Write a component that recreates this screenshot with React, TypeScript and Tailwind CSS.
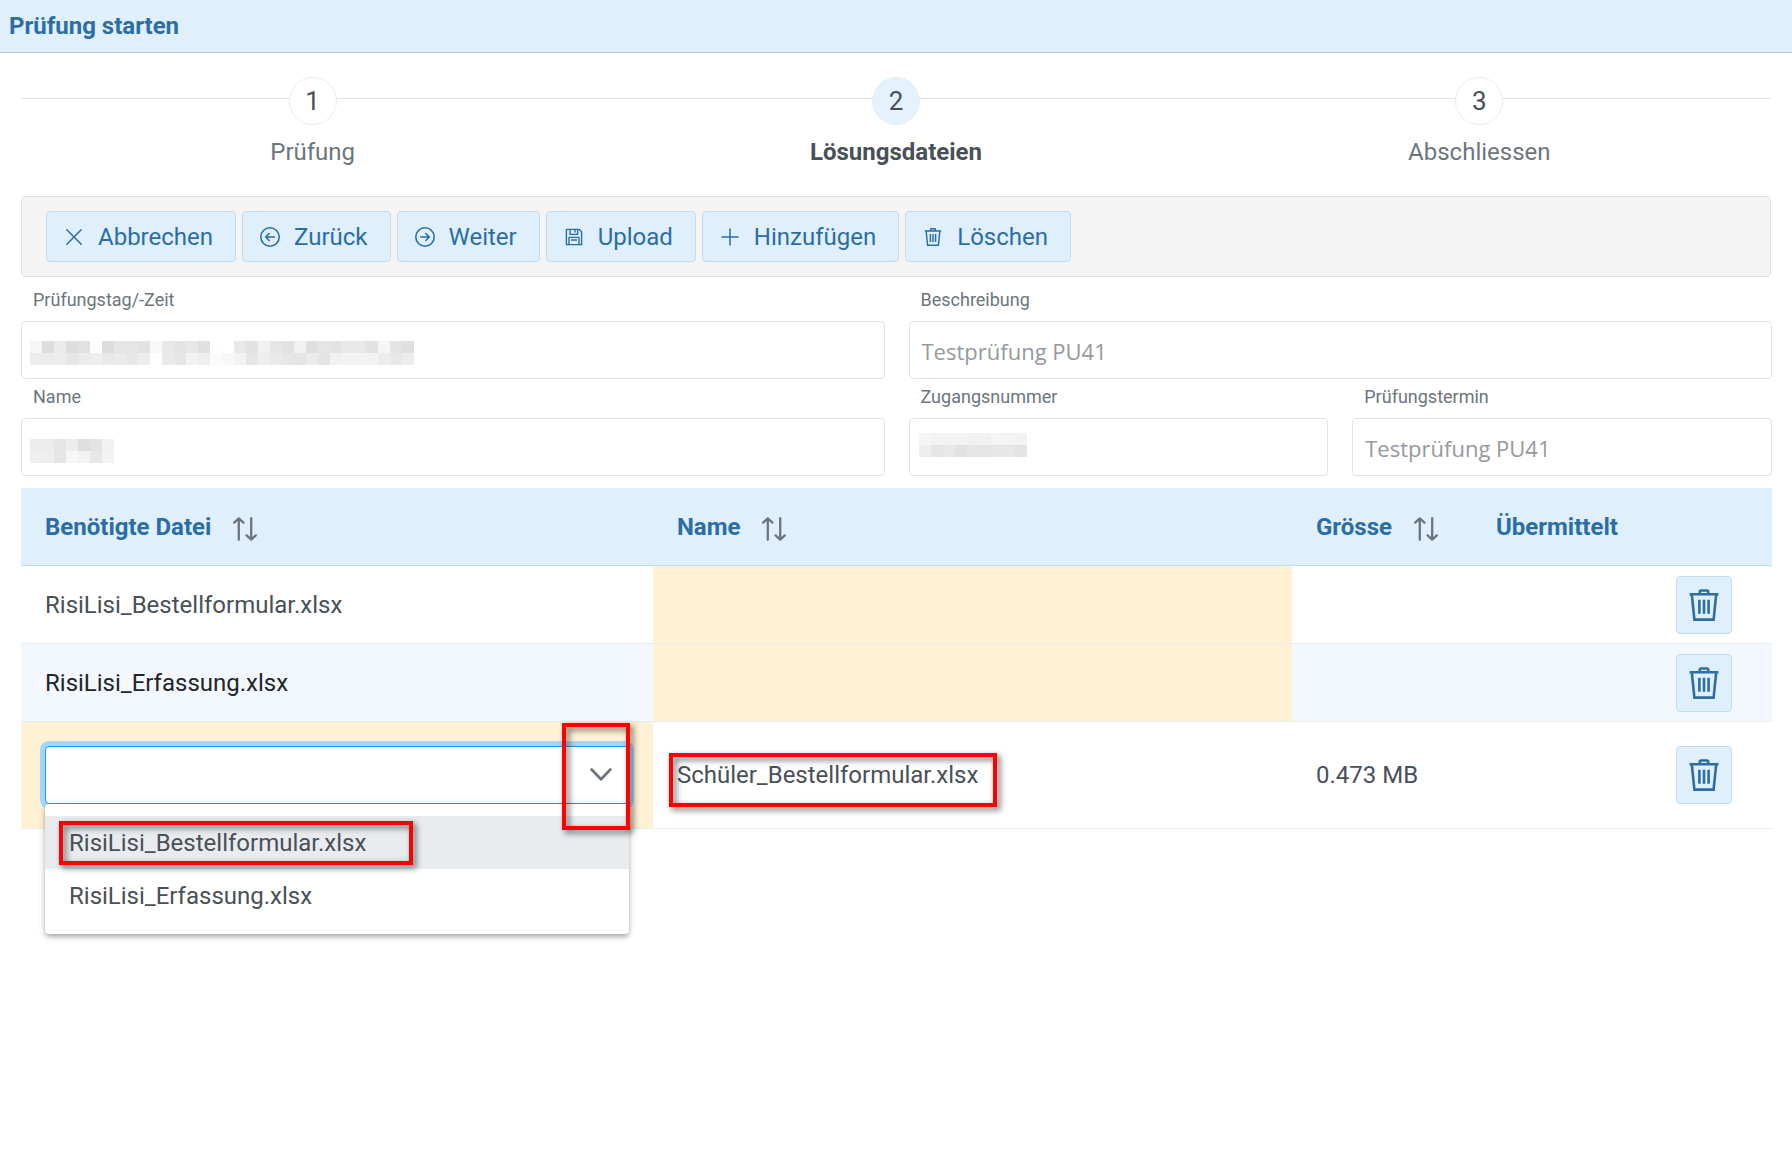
import type { ReactNode } from 'react';

interface IconProps {
  className?: string;
}

interface Step {
  label: string;
  active?: boolean;
}

interface FileRow {
  id: number;
  required: string | null;
  name: string;
  size: string;
}

interface FieldProps {
  id: string;
  label: string;
  value?: string;
  className?: string;
  children?: ReactNode;
}

const steps: Step[] = [
  { label: 'Prüfung' },
  { label: 'Lösungsdateien', active: true },
  { label: 'Abschliessen' },
];

const rows: FileRow[] = [
  { id: 1, required: 'RisiLisi_Bestellformular.xlsx', name: '', size: '' },
  { id: 2, required: 'RisiLisi_Erfassung.xlsx', name: '', size: '' },
  { id: 3, required: null, name: 'Schüler_Bestellformular.xlsx', size: '0.473 MB' },
];

const options = ['RisiLisi_Bestellformular.xlsx', 'RisiLisi_Erfassung.xlsx'];

// grey levels of the redacted values, one list per mosaic row
const examDateMask = [
  [246, 221, 235, 221, 225, 252, 221, 229, 229, 226, 248, 232, 227, 232, 224, 254, 255, 232, 226, 241, 229, 226, 241, 223, 229, 227, 233, 232, 226, 245, 228, 223],
  [236, 235, 236, 230, 235, 238, 233, 235, 232, 236, 255, 233, 230, 243, 238, 251, 248, 243, 230, 237, 233, 230, 229, 235, 228, 241, 243, 243, 242, 236, 232, 236],
];
const nameMask = [
  [237, 236, 229, 237, 222, 227, 241],
  [239, 238, 229, 246, 243, 231, 243],
];
const accessMask = [
  [245, 243, 243, 243, 241, 241, 245, 244, 242],
  [238, 229, 232, 226, 230, 229, 231, 231, 227],
];

function CloseIcon({ className }: IconProps) {
  return (
    <svg className={className} viewBox="0 0 20 20" fill="none" stroke="currentColor" strokeWidth={1.5} strokeLinecap="round">
      <path d="M2.8 2.8l14.4 14.4M17.2 2.8L2.8 17.2" />
    </svg>
  );
}

function ArrowCircleLeftIcon({ className }: IconProps) {
  return (
    <svg className={className} viewBox="0 0 20 20" fill="none" stroke="currentColor" strokeWidth={1.6} strokeLinecap="round" strokeLinejoin="round">
      <circle cx="10" cy="10" r="9.2" />
      <path d="M14.4 10H5.8M9.2 6.5L5.7 10l3.5 3.5" />
    </svg>
  );
}

function ArrowCircleRightIcon({ className }: IconProps) {
  return (
    <svg className={className} viewBox="0 0 20 20" fill="none" stroke="currentColor" strokeWidth={1.6} strokeLinecap="round" strokeLinejoin="round">
      <circle cx="10" cy="10" r="9.2" />
      <path d="M5.6 10h8.6M10.8 6.5l3.5 3.5-3.5 3.5" />
    </svg>
  );
}

function SaveIcon({ className }: IconProps) {
  return (
    <svg className={className} viewBox="0 0 20 20" fill="none" stroke="currentColor" strokeWidth={1.4} strokeLinejoin="round">
      <path d="M2.4 2.4h12.8l2.4 2.4v12.8H2.4z" />
      <path d="M6 2.6v4.8h7.6V2.6M11 3v2.4M5 17.4v-7h10v7M7 13h6" />
    </svg>
  );
}

function PlusIcon({ className }: IconProps) {
  return (
    <svg className={className} viewBox="0 0 20 20" fill="none" stroke="currentColor" strokeWidth={1.5} strokeLinecap="round">
      <path d="M10 2v16M2 10h16" />
    </svg>
  );
}

function TrashIcon({ className }: IconProps) {
  return (
    <svg className={className} viewBox="0 0 32 32" fill="none" stroke="currentColor" strokeWidth={2.6}>
      <path d="M1.5 5.2h29M11.8 5V2.8c0-.8.5-1.3 1.2-1.3h6c.7 0 1.2.5 1.2 1.3V5" />
      <path d="M3.8 5.4l2.6 25.2h19.2l2.6-25.2M11.4 10.8v14M16 10.8v14M20.6 10.8v14" />
    </svg>
  );
}

function SortIcon() {
  return (
    <svg className="mt-1 h-6 w-6 text-[#6c757d]" viewBox="0 0 24 24" fill="none" stroke="currentColor" strokeWidth={2.3} strokeLinecap="round" strokeLinejoin="round">
      <path d="M5.8 22.8V1.4M1.2 5.6l4.6-4.2 4.6 4.2" />
      <path d="M18.2 1.2v21.4M13.6 18.4l4.6 4.2 4.6-4.2" />
    </svg>
  );
}

function Mask({ levels, className }: { levels: number[][]; className: string }) {
  return (
    <svg
      className={`absolute ${className}`}
      width={levels[0].length * 12}
      height={levels.length * 12}
      shapeRendering="crispEdges"
      aria-hidden="true"
    >
      {levels.map((line, y) =>
        line.map((v, x) => (
          <rect key={`${x}-${y}`} x={x * 12} y={y * 12} width={12} height={12} fill={`rgb(${v},${v},${v + 1})`} />
        ))
      )}
    </svg>
  );
}

function Field({ id, label, value = '', className = '', children }: FieldProps) {
  return (
    <div className={className}>
      <label htmlFor={id} className="block h-11 pl-3 pt-[11px] text-lg leading-6 text-[#6c757d]">
        {label}
      </label>
      <div className="relative">
        <input
          id={id}
          type="text"
          readOnly
          defaultValue={value}
          className="block h-[58px] w-full rounded border border-[#e1e3e7] bg-white px-3 pt-0.5 font-['Open_Sans','Noto_Sans',sans-serif] text-[22px] text-[#96999d] outline-none"
        />
        {children}
      </div>
    </div>
  );
}

function ToolbarButton({ icon, children }: { icon: ReactNode; children: ReactNode }) {
  return (
    <button
      type="button"
      className="flex h-[51px] items-center gap-3.5 rounded border border-[#c1dcec] bg-[#dfeffc] pl-[17px] pr-[22px] text-2xl text-[#2c6ea3]"
    >
      {icon}
      {children}
    </button>
  );
}

function FileSelect() {
  return (
    <div className="relative">
      <select
        aria-label="Benötigte Datei"
        defaultValue=""
        className="block h-[58px] w-full appearance-none rounded border border-[#2196f3] bg-white px-3 text-2xl shadow-[0_0_0_5px_#a6d5fa] outline-none"
      >
        <option value=""></option>
        {options.map((option) => (
          <option key={option}>{option}</option>
        ))}
      </select>
      <svg className="pointer-events-none absolute right-4 top-4 h-6 w-6 text-[#6c757d]" viewBox="0 0 24 24" fill="none" stroke="currentColor" strokeWidth={2.8} strokeLinecap="round" strokeLinejoin="round">
        <path d="M2.6 7.6L12 17.2l9.4-9.6" />
      </svg>
      <ul
        role="listbox"
        aria-label="Benötigte Datei"
        className="absolute left-0 top-full z-10 w-full rounded bg-white py-3 shadow-[0_4px_5px_0_rgba(0,0,0,0.14),0_1px_10px_0_rgba(0,0,0,0.12),0_2px_4px_-1px_rgba(0,0,0,0.2)]"
      >
        {options.map((option, i) => (
          <li
            key={option}
            role="option"
            aria-selected={i === 0}
            className={`flex h-[53px] items-center px-6 ${i === 0 ? 'bg-[#e9ecef]' : ''}`}
          >
            {option}
          </li>
        ))}
      </ul>
      <Marker className="left-[14px] top-[75px] h-11 w-[354px]" />
      <Marker className="-right-px -top-[23px] h-[107px] w-[68px]" />
    </div>
  );
}

// red frame drawn over the part that the reader has to look at
function Marker({ className }: { className: string }) {
  return (
    <div className={`pointer-events-none absolute z-20 border-4 border-[#ff0000] drop-shadow-[3px_3px_3px_rgba(0,0,0,0.6)] ${className}`} />
  );
}

export default function App() {
  return (
    <div className="min-h-screen bg-white font-[Roboto,'Liberation_Sans',sans-serif] text-2xl text-[#495057]">
      <header className="flex h-[53px] items-center border-b border-[#c3c8cc] bg-[#dfeffc] px-[9px]">
        <h1 className="text-2xl font-bold text-[#2c6ea3]">Prüfung starten</h1>
      </header>

      <main className="pl-[21px] pr-5">
        <div className="relative mr-px pt-6">
          <div className="absolute inset-x-0 top-[45px] border-t border-[#dee2e6]" />
          <ol className="relative grid grid-cols-3">
            {steps.map((step, i) => (
              <li key={step.label} className="flex flex-col items-center">
                <span
                  className={`flex size-12 items-center justify-center rounded-full border border-[#ebedef] text-[26px] ${
                    step.active ? 'bg-[#e3f2fd]' : 'bg-white'
                  }`}
                >
                  {i + 1}
                </span>
                <span className={`mt-[11px] leading-8 ${step.active ? 'font-bold' : 'text-[#6c757d]'}`}>{step.label}</span>
              </li>
            ))}
          </ol>
        </div>

        <div role="toolbar" className="mr-px mt-7 flex h-[81px] items-center gap-1.5 rounded border border-[#dee2e6] bg-[#f4f4f4] px-6">
          <ToolbarButton icon={<CloseIcon className="size-5" />}>Abbrechen</ToolbarButton>
          <ToolbarButton icon={<ArrowCircleLeftIcon className="size-5" />}>Zurück</ToolbarButton>
          <ToolbarButton icon={<ArrowCircleRightIcon className="size-5" />}>Weiter</ToolbarButton>
          <ToolbarButton icon={<SaveIcon className="size-5" />}>Upload</ToolbarButton>
          <ToolbarButton icon={<PlusIcon className="size-5" />}>Hinzufügen</ToolbarButton>
          <ToolbarButton icon={<TrashIcon className="size-5 p-px" />}>Löschen</ToolbarButton>
        </div>

        <form className="grid grid-cols-4 gap-x-6">
          <Field id="exam-date" label="Prüfungstag/-Zeit" className="col-span-2">
            <Mask levels={examDateMask} className="left-[9px] top-5" />
          </Field>
          <Field id="description" label="Beschreibung" value="Testprüfung PU41" className="col-span-2" />
          <Field id="name" label="Name" className="col-span-2 -mt-[5px]">
            <Mask levels={nameMask} className="left-[9px] top-[21px]" />
          </Field>
          <Field id="access-number" label="Zugangsnummer" className="-mt-[5px]">
            <Mask levels={accessMask} className="left-[10px] top-[15px]" />
          </Field>
          <Field id="exam-slot" label="Prüfungstermin" value="Testprüfung PU41" className="-mt-[5px]" />
        </form>

        <table className="mt-3 w-full table-fixed border-separate border-spacing-0">
          <thead>
            <tr className="h-[78px] bg-[#dfeffc] text-left text-[#2c6ea3] [&>th]:border-b [&>th]:border-[#c1dcec] [&>th]:px-6">
              <th>
                <span className="flex items-center gap-[22px]">Benötigte Datei <SortIcon /></span>
              </th>
              <th className="w-[36.5%]">
                <span className="flex items-center gap-[22px]">Name <SortIcon /></span>
              </th>
              <th className="w-[180px]">
                <span className="flex items-center gap-[22px]">Grösse <SortIcon /></span>
              </th>
              <th className="w-[180px]">Übermittelt</th>
              <th className="w-[120px]" aria-label="Aktionen" />
            </tr>
          </thead>
          <tbody>
            {rows.map((row, i) => (
              <tr
                key={row.id}
                className={`[&>td]:border-b [&>td]:border-[#e9ecef] [&>td]:px-6 ${row.required ? 'h-[78px]' : 'h-[107px]'} ${
                  i % 2 === 1 ? 'bg-[#f3f8ff] text-[#212529]' : ''
                }`}
              >
                <td className={row.required ? '' : 'bg-[#fff2d4]'}>{row.required ?? <FileSelect />}</td>
                <td className={row.name ? '' : 'bg-[#fff2d4]'}>
                  {row.name && (
                    <span className="relative inline-block">
                      {row.name}
                      <Marker className="-left-2 -right-[19px] -top-[6px] h-[54px]" />
                    </span>
                  )}
                </td>
                <td>{row.size}</td>
                <td></td>
                <td>
                  <button
                    type="button"
                    aria-label="Löschen"
                    className="flex h-[58px] w-14 items-center justify-center rounded border border-[#c1dcec] bg-[#dfeffc] text-[#2c6ea3]"
                  >
                    <TrashIcon className="size-8" />
                  </button>
                </td>
              </tr>
            ))}
          </tbody>
        </table>
      </main>
    </div>
  );
}
